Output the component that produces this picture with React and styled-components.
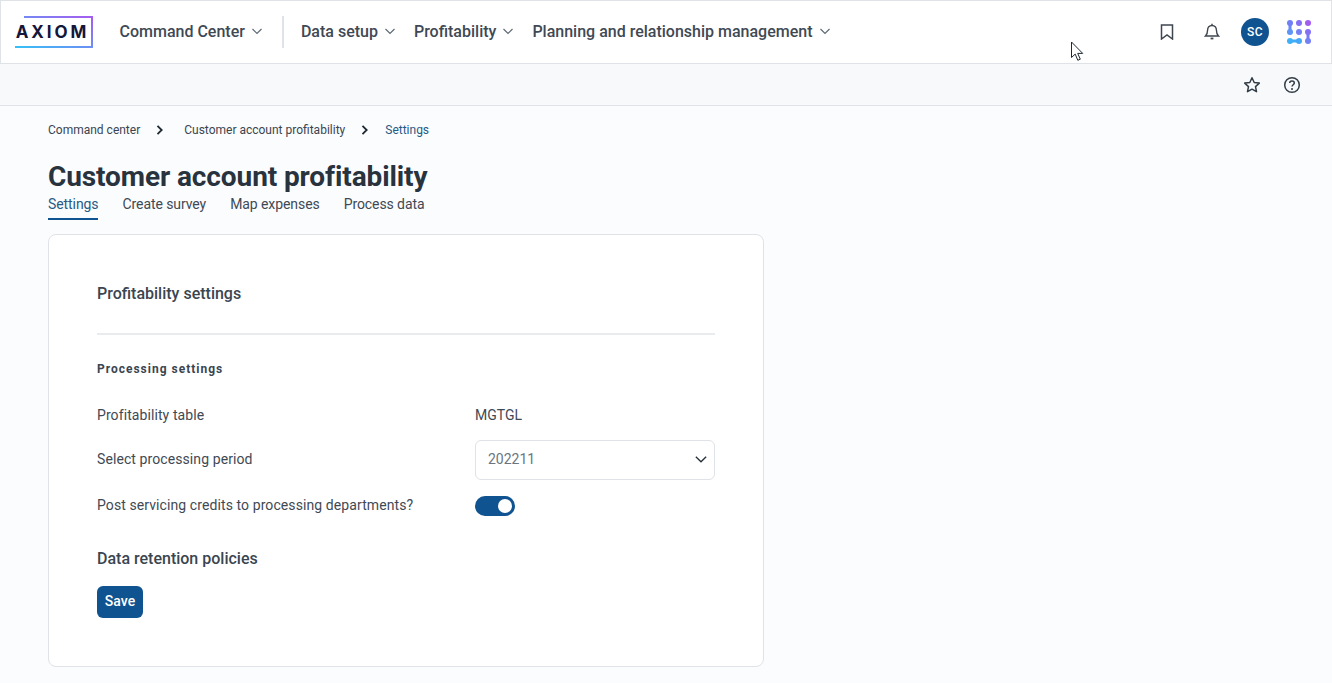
import styled, { createGlobalStyle } from 'styled-components';

const GlobalStyle = createGlobalStyle`
  html, body {
    margin: 0;
    padding: 0;
    background: #fbfcfe;
    font-family: Roboto, "Liberation Sans", sans-serif;
    color: #333d47;
  }
  * { box-sizing: border-box; }
`;

const Page = styled.div`
  position: relative;
  width: 1332px;
  height: 683px;
  overflow: hidden;
`;

const Header = styled.header`
  height: 64px;
  display: flex;
  align-items: center;
  padding: 0 20px 0 14px;
  background: #fff;
  border: 1px solid #dfe2e7;
`;

const Logo = styled.div`
  position: relative;
  width: 78px;
  height: 32px;
  display: flex;
  align-items: center;
  justify-content: center;
  font-family: Inter, sans-serif;
  font-weight: 700;
  font-size: 17px;
  letter-spacing: 2.9px;
  color: #14163a;
  padding-right: 3px;
`;

const LogoFrame = styled.svg`
  position: absolute;
  inset: 0;
`;

const NavGroup = styled.nav`
  display: flex;
  align-items: center;
  gap: 17px;
  margin-left: ${p => p.$ml || 0}px;
  padding-bottom: 2px;
`;

const NavItem = styled.div`
  display: flex;
  align-items: center;
  gap: 5px;
  font-size: 16px;
  font-weight: 500;
  color: #3f4954;
  white-space: nowrap;
`;

const NavDivider = styled.div`
  width: 2px;
  height: 32px;
  background: #dfe2e7;
  margin: 0 17px 0 18px;
`;

const HeaderRight = styled.div`
  margin-left: auto;
  display: flex;
  align-items: center;
`;

const IconSlot = styled.div`
  display: flex;
  align-items: center;
  justify-content: center;
  margin-left: ${p => p.$ml || 0}px;
`;

const Avatar = styled.div`
  width: 28px;
  height: 28px;
  border-radius: 50%;
  margin-left: 21px;
  background: #0f5390;
  color: #fff;
  font-size: 12px;
  font-weight: 500;
  letter-spacing: 0.5px;
  display: flex;
  align-items: center;
  justify-content: center;
`;

const SubBar = styled.div`
  height: 42px;
  display: flex;
  align-items: center;
  justify-content: flex-end;
  gap: 22px;
  padding: 0 31px 0 0;
  background: #f8f9fb;
  border-bottom: 1px solid #dfe2e7;
`;

const Main = styled.main`
  padding: 0 48px;
`;

const Breadcrumbs = styled.div`
  display: flex;
  align-items: center;
  height: 16px;
  margin-top: 16px;
  font-size: 12px;
  color: #3a4550;
`;

const Crumb = styled.span`
  color: ${p => (p.$current ? '#275a85' : '#3a4550')};
`;

const CrumbSep = styled.span`
  display: flex;
  margin: 0 ${p => p.$right}px 0 ${p => p.$left}px;
`;

const Title = styled.h1`
  margin: 23px 0 0;
  height: 32px;
  line-height: 32px;
  font-size: 28px;
  font-weight: 700;
  letter-spacing: -0.1px;
  color: #29333d;
`;

const Tabs = styled.div`
  display: flex;
  gap: 24px;
  margin-top: 1px;
`;

const Tab = styled.div`
  height: 26px;
  padding-top: 2px;
  font-size: 14px;
  line-height: 16px;
  letter-spacing: -0.08px;
  color: ${p => (p.$active ? '#275a85' : '#3f4954')};
  border-bottom: 2px solid ${p => (p.$active ? '#0f5390' : 'transparent')};
`;

const Card = styled.section`
  width: 716px;
  height: 433px;
  margin-top: 14px;
  padding: 49px 48px 48px;
  background: #fff;
  border: 1px solid #dfe2e7;
  border-radius: 8px;
`;

const CardTitle = styled.h2`
  margin: 0;
  height: 20px;
  line-height: 20px;
  font-size: 16px;
  font-weight: 500;
  color: #3a4550;
`;

const Rule = styled.hr`
  margin: 29px 0 0;
  border: 0;
  border-top: 2px solid #e9ebee;
`;

const SectionLabel = styled.div`
  margin-top: 27px;
  font-size: 12px;
  line-height: 14px;
  font-weight: 700;
  letter-spacing: 1px;
  color: #3a4550;
`;

const Row = styled.div`
  display: grid;
  grid-template-columns: 378px 240px;
  align-items: center;
  height: ${p => p.$h}px;
  margin-top: ${p => p.$mt}px;
  font-size: 14px;
  color: #3f4954;
`;

const RowLabel = styled.span`
  letter-spacing: 0.09px;
  margin-bottom: ${p => (p.$lift ? 2 : 0)}px;
`;

const Select = styled.div`
  height: 40px;
  display: flex;
  align-items: center;
  justify-content: space-between;
  padding: 0 5px 2px 12px;
  border: 1px solid #dfe2e7;
  border-radius: 6px;
  color: #6b7580;
`;

const Toggle = styled.div`
  width: 40px;
  height: 20px;
  padding: 3px;
  display: flex;
  justify-content: flex-end;
  background: #0f5390;
  border-radius: 10px;
`;

const Knob = styled.div`
  width: 14px;
  height: 14px;
  border-radius: 50%;
  background: #fff;
`;

const SubHeading = styled.h3`
  margin: 33px 0 0;
  height: 20px;
  line-height: 20px;
  font-size: 16px;
  font-weight: 500;
  color: #3a4550;
`;

const SaveButton = styled.button`
  display: block;
  width: 46px;
  height: 32px;
  margin-top: 17px;
  padding: 0 0 2px;
  border: 0;
  border-radius: 6px;
  background: #0f5390;
  color: #fff;
  font-family: inherit;
  font-size: 14px;
  font-weight: 500;
`;

const Cursor = styled.svg`
  position: absolute;
  left: 1070px;
  top: 41px;
`;

const Chevron = ({ size = 14, color = '#5f6973', width = 1.2 }) => (
  <svg width={size} height={size} viewBox="0 0 14 14" fill="none">
    <path d="M2.5 5l4.5 4.5L11.5 5" stroke={color} strokeWidth={width} />
  </svg>
);

const CrumbArrow = () => (
  <svg width="8" height="10" viewBox="0 0 8 10" fill="none">
    <path d="M1.500 0.800L5.700 5L1.500 9.200" stroke="#1f2933" strokeWidth="1.800" />
  </svg>
);

const dots = [
  [3, 3, '#6f80f6'], [12, 3, '#8470f5'], [21, 3, '#a25cf0'],
  [3, 12, '#5b95f6'], [12, 12, '#7480f6'], [21, 12, '#8470f5'],
  [3, 21, '#3fb0f7'], [12, 21, '#45a8f7'], [21, 21, '#7480f6'],
];

const AppsIcon = () => (
  <svg width="24" height="24" viewBox="0 0 24 24" fill="none">
    <path d="M3 3v9" stroke="#6589f6" strokeWidth="3" />
    <path d="M3 21h9" stroke="#42acf7" strokeWidth="3" />
    <path d="M21 12v9" stroke="#7c78f5" strokeWidth="3" />
    {dots.map(([cx, cy, fill]) => (
      <circle key={`${cx}-${cy}`} cx={cx} cy={cy} r="3" fill={fill} />
    ))}
  </svg>
);

const NavLink = ({ label }) => (
  <NavItem>
    {label}
    <Chevron />
  </NavItem>
);

export default function App() {
  return (
    <Page>
      <GlobalStyle />
      <Header>
        <Logo>
          <LogoFrame width="78" height="32" viewBox="0 0 78 32" fill="none">
            <defs>
              <linearGradient id="logo" x1="0" y1="1" x2="1" y2="0">
                <stop offset="0" stopColor="#35c0f7" />
                <stop offset="1" stopColor="#a55cf0" />
              </linearGradient>
            </defs>
            <path d="M9 1H77V31H0" stroke="url(#logo)" strokeWidth="2" />
          </LogoFrame>
          AXIOM
        </Logo>
        <NavGroup $ml={26.5}>
          <NavLink label="Command Center" />
        </NavGroup>
        <NavDivider />
        <NavGroup>
          <NavLink label="Data setup" />
          <NavLink label="Profitability" />
          <NavLink label="Planning and relationship management" />
        </NavGroup>
        <HeaderRight>
          <IconSlot>
            <svg width="14" height="16" viewBox="0 0 14 16" fill="none">
              <path d="M1.500 1h11v14L7 11l-5.500 4z" stroke="#3f4650" strokeWidth="1.500" />
            </svg>
          </IconSlot>
          <IconSlot $ml={30}>
            <svg width="16" height="18" viewBox="0 0 16 18" fill="none">
              <path d="M8 2.500c-2.800 0-4.400 2-4.400 4.500 0 3.400-1.100 5-2.100 6h13c-1-1-2.100-2.600-2.100-6 0-2.500-1.600-4.500-4.400-4.500z" stroke="#3f4650" strokeWidth="1.400" />
              <path d="M8 .8v1.600" stroke="#3f4650" strokeWidth="1.400" />
              <path d="M6.600 15.500h2.800" stroke="#3f4650" strokeWidth="1.800" />
            </svg>
          </IconSlot>
          <Avatar>SC</Avatar>
          <IconSlot $ml={18}>
            <AppsIcon />
          </IconSlot>
        </HeaderRight>
      </Header>
      <SubBar>
        <svg width="18" height="18" viewBox="0 0 18 18" fill="none">
          <path d="M9 1.800l2.200 4.700 5.100.6-3.800 3.500 1 5.100L9 13.200l-4.500 2.500 1-5.100L1.700 7.100l5.100-.6z" stroke="#333d47" strokeWidth="1.500" strokeLinejoin="round" />
        </svg>
        <svg width="18" height="18" viewBox="0 0 18 18" fill="none">
          <circle cx="9" cy="9" r="7.300" stroke="#333d47" strokeWidth="1.500" />
          <path d="M6.700 7.100c0-1.300 1-2.200 2.300-2.200s2.300.9 2.300 2.100c0 1.700-2.300 1.800-2.300 3.600" stroke="#333d47" strokeWidth="1.500" />
          <circle cx="9" cy="12.900" r="1" fill="#333d47" />
        </svg>
      </SubBar>
      <Main>
        <Breadcrumbs>
          <Crumb>Command center</Crumb>
          <CrumbSep $left={16} $right={20}><CrumbArrow /></CrumbSep>
          <Crumb>Customer account profitability</Crumb>
          <CrumbSep $left={16} $right={16}><CrumbArrow /></CrumbSep>
          <Crumb $current>Settings</Crumb>
        </Breadcrumbs>
        <Title>Customer account profitability</Title>
        <Tabs>
          <Tab $active>Settings</Tab>
          <Tab>Create survey</Tab>
          <Tab>Map expenses</Tab>
          <Tab>Process data</Tab>
        </Tabs>
        <Card>
          <CardTitle>Profitability settings</CardTitle>
          <Rule />
          <SectionLabel>Processing settings</SectionLabel>
          <Row $h={20} $mt={29}>
            <RowLabel>Profitability table</RowLabel>
            <span>MGTGL</span>
          </Row>
          <Row $h={40} $mt={15}>
            <RowLabel $lift>Select processing period</RowLabel>
            <Select>
              202211
              <Chevron size={16} color="#29333d" width={1.2} />
            </Select>
          </Row>
          <Row $h={20} $mt={16}>
            <RowLabel $lift>Post servicing credits to processing departments?</RowLabel>
            <Toggle><Knob /></Toggle>
          </Row>
          <SubHeading>Data retention policies</SubHeading>
          <SaveButton>Save</SaveButton>
        </Card>
      </Main>
      <Cursor width="14" height="21" viewBox="0 0 14 21">
        <path d="M1.500 1v15.500l3.700-3.400 2.600 6.200 2.500-1.100-2.600-5.800h5z" fill="#fff" stroke="#1f2933" strokeWidth="1" />
      </Cursor>
    </Page>
  );
}
